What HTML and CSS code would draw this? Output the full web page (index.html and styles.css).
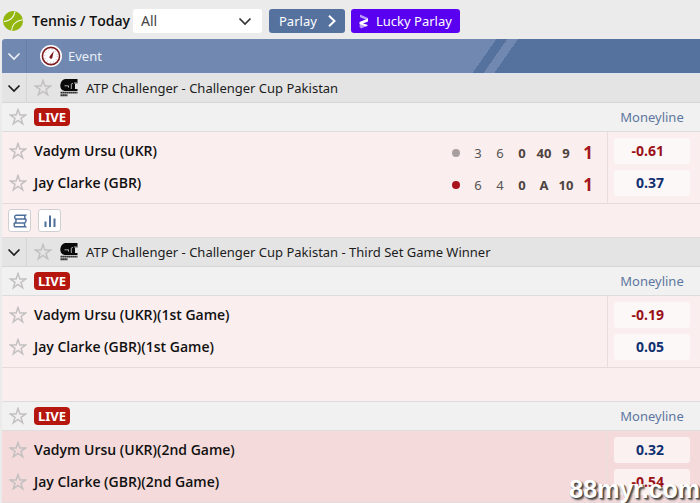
FILE: index.html
```html
<!DOCTYPE html>
<html lang="en">
<head>
    <meta charset="UTF-8">
    <meta name="viewport" content="width=device-width, initial-scale=1.0">
    <title>Tennis / Today</title>
    <link rel="stylesheet" href="styles.css">
</head>
<body>
    <!-- shared icons -->
    <svg class="sprite" aria-hidden="true">
        <symbol id="star" viewBox="0 0 18 18">
            <path d="M9 1.6 L10.9 7 H16.6 L12 10.4 L13.7 15.9 L9 12.5 L4.3 15.9 L6 10.4 L1.4 7 H7.1 Z" fill="none" stroke="currentColor" stroke-width="1.5"/>
        </symbol>
        <symbol id="chevron" viewBox="0 0 14 14">
            <path d="M1.5 4.5 L7 10 L12.5 4.5" fill="none" stroke="currentColor" stroke-width="1.7"/>
        </symbol>
        <symbol id="tour" viewBox="0 0 18 18">
            <path d="M5 0 H17.5 V4.5 H15 V10 H17.5 V12 H4.5 Q0 11 0.3 6 Q1 1 5 0 Z" fill="#0a0a0a"/>
            <path d="M4.5 6.8 H8.5 V8.6 M11.3 5 V10 M11.5 4.6 H13 M14 4 H17" fill="none" stroke="#d8d8d8" stroke-width="0.8"/>
            <path d="M0.5 13.6 H17.5" stroke="#333" stroke-width="1.8" stroke-dasharray="1.8 0.2"/>
            <path d="M0.5 16.2 H7.5" stroke="#333" stroke-width="2" stroke-dasharray="1.8 0.2"/>
        </symbol>
    </svg>

    <header class="toolbar">
        <svg class="ball" viewBox="0 0 20 20" aria-hidden="true">
            <circle cx="10" cy="10" r="10" fill="#93b60e"/>
            <path d="M1 10.6 Q10.5 9.5 12 0.6 M8.6 19.6 Q9.5 10.5 19.6 8.8" fill="none" stroke="#f4f8e4" stroke-width="1.1"/>
        </svg>
        <h1>Tennis / Today</h1>
        <div class="select-wrap">
            <select aria-label="Filter matches">
                <option>All</option>
            </select>
            <svg class="chevron" aria-hidden="true"><use href="#chevron"/></svg>
        </div>
        <button class="btn parlay" type="button">Parlay
            <svg class="arrow" viewBox="0 0 14 14" aria-hidden="true"><path d="M4 1.8 L9.5 7 L4 12.2" fill="none" stroke="#fff" stroke-width="2"/></svg>
        </button>
        <button class="btn lucky" type="button">
            <svg class="zed" viewBox="0 0 10 15" aria-hidden="true">
                <path d="M1 0.5 L9 4 V6.5 L1 3.3 Z M1 9 L9 11.5 L2 14.5 L0.5 12.5 Z" fill="#b99bff"/>
                <path d="M9 4.5 V7.5 L4 9.5 L9 11 L7 12.5 L0.5 10 V8 L5.5 6 Z" fill="#fff"/>
            </svg>
            Lucky Parlay
        </button>
    </header>

    <main class="board">
        <div class="event-bar">
            <button class="toggle" type="button" aria-label="Collapse all"><svg class="chevron"><use href="#chevron"/></svg></button>
            <svg class="gauge" viewBox="0 0 22 22" aria-hidden="true">
                <circle cx="11" cy="11" r="11" fill="#fff"/>
                <circle cx="11" cy="11" r="8.6" fill="none" stroke="#7d1c20" stroke-width="1.6"/>
                <circle cx="11" cy="11" r="6.3" fill="none" stroke="#b98a8c" stroke-width="1" stroke-dasharray="0.7 2.6"/>
                <path d="M13.8 6 L12.4 12.4 A1.5 1.5 0 1 1 9.9 11 Z" fill="#7d1c20"/>
            </svg>
            <span>Event</span>
        </div>

        <section>
            <div class="league">
                <button class="toggle" type="button" aria-label="Collapse league"><svg class="chevron"><use href="#chevron"/></svg></button>
                <button class="fav" type="button" aria-label="Favourite league"><svg><use href="#star"/></svg></button>
                <svg class="tour" aria-hidden="true"><use href="#tour"/></svg>
                <h2>ATP Challenger - Challenger Cup Pakistan</h2>
            </div>
            <div class="live-row">
                <button class="fav" type="button" aria-label="Favourite match"><svg><use href="#star"/></svg></button>
                <span class="live">LIVE</span>
                <span class="market">Moneyline</span>
            </div>
            <div class="match">
                <div class="teams">
                    <div class="team"><button class="fav" type="button" aria-label="Favourite Vadym Ursu"><svg><use href="#star"/></svg></button>Vadym Ursu (UKR)</div>
                    <div class="team"><button class="fav" type="button" aria-label="Favourite Jay Clarke"><svg><use href="#star"/></svg></button>Jay Clarke (GBR)</div>
                </div>
                <table class="score">
                    <tr><td><i class="dot"></i></td><td>3</td><td>6</td><td class="now">0</td><td class="now">40</td><td class="now">9</td><td class="sets">1</td></tr>
                    <tr><td><i class="dot serving"></i></td><td>6</td><td>4</td><td class="now">0</td><td class="now">A</td><td class="now">10</td><td class="sets">1</td></tr>
                </table>
                <div class="odds">
                    <button class="minus" type="button">-0.61</button>
                    <button type="button">0.37</button>
                </div>
            </div>
            <div class="actions">
                <button type="button" aria-label="Court view">
                    <svg viewBox="0 0 14 14" aria-hidden="true"><path d="M2.5 1.2 H12.5 Q10.8 3 12.5 5 H2.5 Q0.8 3 2.5 1.2 M2.5 5 Q4 7 1.8 9 H11.8 Q13.8 7 12.5 5 M1.8 9 Q0.4 11 1.8 12.8 H12.5 Q10.8 11 11.8 9" fill="none" stroke="#4f6f9b" stroke-width="1.4"/></svg>
                </button>
                <button type="button" aria-label="Statistics">
                    <svg viewBox="0 0 14 14" aria-hidden="true"><path d="M2.5 7.5 V13 M7 1.5 V13 M11.5 4.5 V13" stroke="#4f6f9b" stroke-width="2"/></svg>
                </button>
            </div>
        </section>

        <section>
            <div class="league">
                <button class="toggle" type="button" aria-label="Collapse league"><svg class="chevron"><use href="#chevron"/></svg></button>
                <button class="fav" type="button" aria-label="Favourite league"><svg><use href="#star"/></svg></button>
                <svg class="tour" aria-hidden="true"><use href="#tour"/></svg>
                <h2>ATP Challenger - Challenger Cup Pakistan - Third Set Game Winner</h2>
            </div>
            <div class="live-row">
                <button class="fav" type="button" aria-label="Favourite match"><svg><use href="#star"/></svg></button>
                <span class="live">LIVE</span>
                <span class="market">Moneyline</span>
            </div>
            <div class="match">
                <div class="teams">
                    <div class="team"><button class="fav" type="button" aria-label="Favourite Vadym Ursu"><svg><use href="#star"/></svg></button>Vadym Ursu (UKR)(1st Game)</div>
                    <div class="team"><button class="fav" type="button" aria-label="Favourite Jay Clarke"><svg><use href="#star"/></svg></button>Jay Clarke (GBR)(1st Game)</div>
                </div>
                <div class="odds">
                    <button class="minus" type="button">-0.19</button>
                    <button type="button">0.05</button>
                </div>
            </div>
            <div class="actions"></div>
            <div class="live-row">
                <button class="fav" type="button" aria-label="Favourite match"><svg><use href="#star"/></svg></button>
                <span class="live">LIVE</span>
                <span class="market">Moneyline</span>
            </div>
            <div class="match changed">
                <div class="teams">
                    <div class="team"><button class="fav" type="button" aria-label="Favourite Vadym Ursu"><svg><use href="#star"/></svg></button>Vadym Ursu (UKR)(2nd Game)</div>
                    <div class="team"><button class="fav" type="button" aria-label="Favourite Jay Clarke"><svg><use href="#star"/></svg></button>Jay Clarke (GBR)(2nd Game)</div>
                </div>
                <div class="odds">
                    <button type="button">0.32</button>
                    <button class="minus" type="button">-0.54</button>
                </div>
            </div>
        </section>
    </main>
    <div class="watermark">88myr.com</div>
</body>
</html>
```

FILE: styles.css
```css
* {
    box-sizing: border-box;
}
body {
    margin: 0;
    position: relative;
    background: #ebebeb;
    color: #1c1c1c;
    font-family: "Noto Sans", "Open Sans", sans-serif;
    font-size: 13px;
    line-height: 20px;
}
button, select {
    font: inherit;
    color: inherit;
    border: none;
    padding: 0;
    cursor: pointer;
}
svg {
    display: block;
    flex: none;
}
h1, h2 {
    margin: 0;
    font-size: 13px;
}
h1, .team {
    font-family: "Open Sans", "Noto Sans", sans-serif;
    font-size: 14px;
    font-weight: 600;
    color: #111;
    white-space: nowrap;
}
h2 {
    font-weight: normal;
}
.sprite {
    display: none;
}
.toolbar {
    display: flex;
    align-items: center;
    height: 39px;
    padding: 3px 3px 0;
}
.ball {
    width: 20px;
    height: 20px;
    margin-right: 9px;
}
.select-wrap {
    position: relative;
    width: 129px;
    margin: 0 7px 0 3px;
}
.select-wrap select {
    width: 100%;
    height: 24px;
    padding: 0 8px;
    appearance: none;
    background: #fff;
    border-radius: 3px;
    color: #444;
    font-size: 14px;
}
.select-wrap .chevron {
    position: absolute;
    right: 10px;
    top: 5px;
    color: #333;
    pointer-events: none;
}
.chevron {
    width: 14px;
    height: 14px;
}
.btn {
    display: flex;
    align-items: center;
    height: 24px;
    border-radius: 3px;
    color: #fff;
}
.parlay {
    width: 76px;
    justify-content: space-between;
    padding: 0 6px 0 10px;
    margin-right: 6px;
    background: #55729f;
}
.arrow {
    width: 14px;
    height: 14px;
}
.lucky {
    gap: 7px;
    padding: 0 8px;
    background: #5800ef;
}
.zed {
    width: 10px;
    height: 15px;
}
.board {
    padding-left: 2px;
}
.event-bar {
    display: flex;
    align-items: center;
    height: 35px;
    border-bottom: 1px solid #dfe5f2;
    border-radius: 3px 0 0 0;
    color: #e9eef8;
    background: linear-gradient(125deg, #7189b0 0 68.5%, #55729f 68.5% 70%, #7189b0 70% 71.5%, #55729f 71.5%);
}
.toggle {
    display: flex;
    align-items: center;
    justify-content: center;
    align-self: stretch;
    width: 25px;
    background: none;
    border-right: 1px solid #d6d6d6;
}
.event-bar .toggle {
    border-color: #667fa8;
}
.gauge {
    width: 22px;
    height: 22px;
    margin: 0 6px 0 13px;
}
.league {
    display: flex;
    align-items: center;
    height: 29px;
    border-bottom: 1px solid #d6d6d6;
    background: #e4e4e4;
}
.fav {
    width: 18px;
    height: 18px;
    background: none;
    color: #c3c0c1;
}
.fav svg {
    width: 18px;
    height: 18px;
}
.league .fav {
    margin-left: 7px;
}
.tour {
    width: 18px;
    height: 18px;
    margin: 0 8px 0 8px;
}
.live-row {
    display: flex;
    align-items: center;
    height: 29px;
    padding-left: 7px;
    border-bottom: 1px solid #dedcdd;
    background: #f1f1f1;
}
.live {
    margin-left: 7px;
    padding: 0 4px;
    border-radius: 4px;
    background: #b5170f;
    color: #fff;
    font-weight: bold;
    line-height: 18px;
}
.market {
    width: 93px;
    margin-left: auto;
    padding-right: 3px;
    text-align: center;
    color: #5d77a0;
}
.match {
    display: flex;
    height: 72px;
    border-bottom: 1px solid #e6dadb;
    background: #fbeeee;
}
.changed {
    background: #f4dada;
}
.teams {
    flex: 1;
    padding: 3px 0 0 7px;
}
.team {
    display: flex;
    align-items: center;
    gap: 7px;
    height: 32px;
}
.score {
    table-layout: fixed;
    width: 154px;
    height: 64px;
    margin: 5px 8px 0 0;
    border-collapse: collapse;
    text-align: center;
    color: #555;
}
.score td {
    height: 32px;
    padding: 0;
}
.score .now {
    font-weight: bold;
    color: #4d4340;
}
.score .sets {
    font-size: 17px;
    font-weight: bold;
    color: #a5161d;
}
.dot {
    display: block;
    width: 8px;
    height: 8px;
    margin: 0 auto;
    border-radius: 50%;
    background: #a8a0a0;
}
.serving {
    background: #a9141c;
}
.odds {
    display: flex;
    flex-direction: column;
    gap: 6px;
    width: 93px;
    padding: 6px 10px 0 6px;
    border-left: 1px solid #eadddd;
}
.odds button {
    height: 26px;
    padding-right: 26px;
    border-radius: 3px;
    background: #fdf8f8;
    color: #10306f;
    font-size: 14px;
    font-weight: bold;
    text-align: right;
}
.changed .odds button {
    background: #fcf1f1;
}
.odds .minus, .changed .odds .minus {
    color: #9a1218;
}
.actions {
    display: flex;
    align-items: center;
    gap: 7px;
    height: 34px;
    padding-left: 6px;
    border-bottom: 1px solid #dedcdd;
    background: #fbeeee;
}
.actions button {
    display: grid;
    place-items: center;
    width: 23px;
    height: 23px;
    border: 1px solid #cfcfd2;
    border-radius: 3px;
    background: #fff;
}
.actions svg {
    width: 14px;
    height: 14px;
}
.watermark {
    position: absolute;
    right: 0;
    bottom: 0;
    font: bold 25px/28px "Liberation Sans", Arial, sans-serif;
    color: #fff;
    text-shadow: 1px 1px 1px #444, 2px 2px 2px #555;
    pointer-events: none;
}
```
